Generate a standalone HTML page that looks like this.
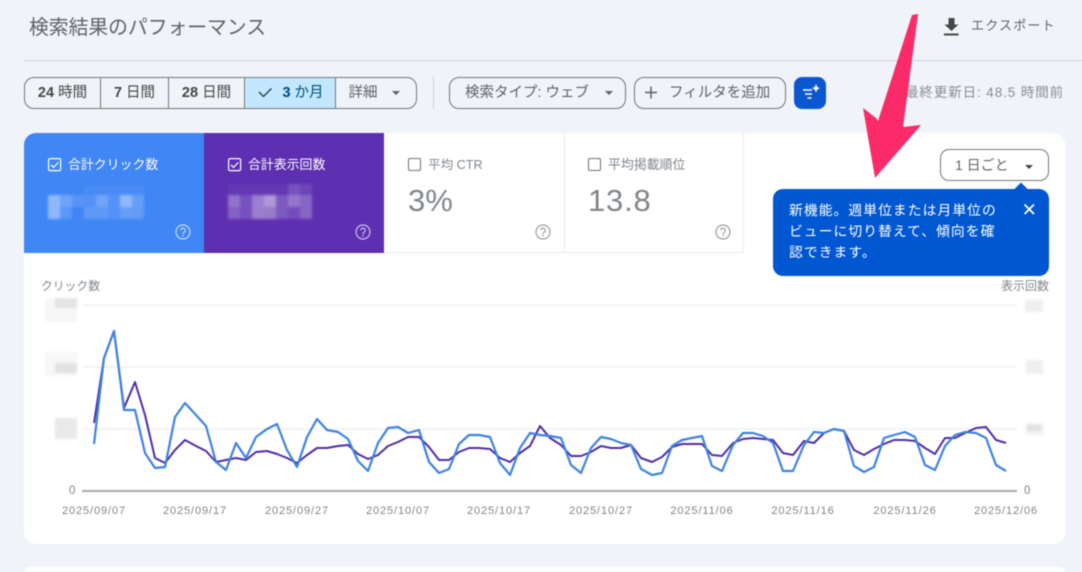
<!DOCTYPE html>
<html lang="ja"><head><meta charset="utf-8"><title>検索結果のパフォーマンス</title>
<style>
html,body{margin:0;padding:0;width:1082px;height:572px;overflow:hidden;background:#f0f4f9}
#w{position:relative;width:1082px;height:572px;overflow:hidden;background:#f0f4f9;font-family:"Liberation Sans","Noto Sans CJK JP",sans-serif;color:#5f6368;filter:blur(.4px)}
.a{position:absolute;white-space:nowrap}
.c{position:absolute;top:78px;height:31px;line-height:30px;text-align:center;font-size:14.5px;color:#444746;box-sizing:border-box}
.p{position:absolute;top:77px;height:32px;box-sizing:border-box;border:1px solid #747775;border-radius:10px;line-height:31px;font-size:14.5px;color:#5f6368;white-space:nowrap}
.t{position:absolute;top:133px;width:180px;height:120px;box-sizing:border-box}
.l{position:absolute;left:44px;top:24px;font-size:12.9px;line-height:16px;white-space:nowrap}
.v{position:absolute;left:24px;top:50px;font-size:31px;line-height:36px;color:#80868b}
.d{position:absolute;top:504px;width:90px;text-align:center;font-size:11px;line-height:14px;letter-spacing:.9px;color:#80868b}
svg{position:absolute;left:0;top:0;overflow:visible}
</style></head><body><div id="w">

<div class="a" style="left:29px;top:14px;font-size:19.8px;line-height:28px;color:#5f6368">検索結果のパフォーマンス</div>
<div class="a" style="left:24px;top:60px;width:1058px;height:1px;background:#d0d2d5"></div>

<svg width="1082" height="572" style="left:0;top:0">
<path d="M944 34.500h14.500" stroke="#444746" stroke-width="2"/>
<path d="M948.500 18h6v6.500h4l-7 6.500-7-6.500h4z" fill="#444746"/>
</svg>
<div class="a" style="left:971px;top:17px;font-size:13px;line-height:18px;letter-spacing:1.200px;color:#5f6368">エクスポート</div>

<div class="a" style="left:24px;top:77px;width:393px;height:32px;box-sizing:border-box;border:1px solid #747775;border-radius:10px;overflow:hidden">
  <div class="a" style="left:220px;top:0;width:91px;height:30px;background:#c2e7ff"></div>
  <div class="a" style="left:75px;top:0;width:1px;height:30px;background:#747775"></div>
  <div class="a" style="left:143px;top:0;width:1px;height:30px;background:#747775"></div>
  <div class="a" style="left:219px;top:0;width:1px;height:30px;background:#747775"></div>
  <div class="a" style="left:310px;top:0;width:1px;height:30px;background:#747775"></div>
</div>
<div class="c" style="left:25px;width:75px"><b style="font-weight:700">24</b> 時間</div>
<div class="c" style="left:101px;width:67px"><b style="font-weight:700">7</b> 日間</div>
<div class="c" style="left:169px;width:75px"><b style="font-weight:700">28</b> 日間</div>
<div class="c" style="left:278px;width:50px;color:#004a77"><b style="font-weight:700">3</b> か月</div>
<div class="c" style="left:335px;width:56px;color:#5f6368">詳細</div>
<svg width="1082" height="572">
<path d="M259 92l4.500 4.500 8-8" fill="none" stroke="#1f3a4d" stroke-width="1.300"/>
<path d="M392 91h8l-4 4z" fill="#5f6368"/>
<path d="M433.500 77v32" stroke="#cfd2d6"/>
</svg>

<div class="p" style="left:449px;width:177px;padding-left:15px">検索タイプ: ウェブ</div>
<div class="p" style="left:634px;width:152px;padding-left:34px">フィルタを追加</div>
<svg width="1082" height="572">
<path d="M605 91h8l-4 4z" fill="#5f6368"/>
<path d="M651 86.500v12M645 92.500h12" stroke="#5f6368" stroke-width="1.500"/>
<rect x="794" y="77" width="32" height="32" rx="8" fill="#0b57d0"/>
<path d="M803 90h9M805 94h7M807.500 98h4" stroke="#fff" stroke-width="1.500"/>
<path d="M816 84l1.300 3 2.700 1.200-2.700 1.300-1.300 3-1.300-3-2.700-1.300 2.700-1.200z" fill="#fff"/>
</svg>
<div class="a" style="left:905px;top:84px;font-size:13.5px;line-height:18px;letter-spacing:.9px;color:#8a8e92">最終更新日: 48.5 時間前</div>

<div class="a" style="left:24px;top:133px;width:1041px;height:411px;background:#fff;border-radius:12px"></div>
<div class="a" style="left:24px;top:567px;width:1041px;height:12px;background:#fff;border-radius:12px"></div>

<div class="t" style="left:24px;background:#4086f5;color:#fff;border-top-left-radius:12px"><div class="l">合計クリック数</div></div>
<div class="t" style="left:204px;background:#5e30b1;color:#fff"><div class="l">合計表示回数</div></div>
<div class="t" style="left:384px;background:#fff;border-bottom:1px solid #e8eaed;color:#80868b"><div class="l" style="font-size:12.6px">平均 CTR</div><div class="v">3%</div></div>
<div class="t" style="left:564px;background:#fff;border-left:1px solid #e8eaed;border-right:1px solid #e8eaed;border-bottom:1px solid #e8eaed;color:#80868b"><div class="l" style="left:43px">平均掲載順位</div><div class="v" style="left:23px;letter-spacing:.8px">13.8</div></div>

<svg width="1082" height="572">
<!-- mosaics -->
<g style="filter:blur(1.200px)">
<g fill="#fff">
<rect x="48" y="195" width="12" height="24" opacity=".42"/><rect x="60" y="207" width="12" height="12" opacity=".14"/><rect x="60" y="195" width="12" height="12" opacity=".24"/>
<rect x="72" y="195" width="12" height="12" opacity=".12"/><rect x="84" y="195" width="12" height="12" opacity=".1"/><rect x="84" y="207" width="12" height="12" opacity=".16"/>
<rect x="96" y="195" width="12" height="12" opacity=".26"/><rect x="96" y="207" width="12" height="12" opacity=".16"/><rect x="108" y="195" width="12" height="12" opacity=".1"/><rect x="108" y="207" width="12" height="12" opacity=".1"/>
<rect x="120" y="195" width="12" height="12" opacity=".42"/><rect x="120" y="207" width="12" height="12" opacity=".2"/><rect x="132" y="195" width="12" height="12" opacity=".2"/><rect x="132" y="207" width="12" height="12" opacity=".18"/>
<rect x="84" y="186" width="60" height="9" opacity=".05"/>
<rect x="228" y="195" width="12" height="12" opacity=".32"/><rect x="228" y="207" width="12" height="12" opacity=".24"/><rect x="240" y="195" width="12" height="24" opacity=".16"/>
<rect x="252" y="195" width="12" height="24" opacity=".38"/><rect x="264" y="195" width="12" height="12" opacity=".5"/><rect x="264" y="207" width="12" height="12" opacity=".36"/>
<rect x="276" y="195" width="12" height="24" opacity=".2"/><rect x="288" y="195" width="12" height="12" opacity=".34"/><rect x="288" y="207" width="12" height="12" opacity=".14"/>
<rect x="300" y="195" width="12" height="24" opacity=".26"/><rect x="288" y="184" width="12" height="11" opacity=".16"/><rect x="300" y="184" width="12" height="11" opacity=".1"/><rect x="228" y="184" width="60" height="11" opacity=".04"/>
</g>
<g fill="#000">
<rect x="45" y="298" width="32" height="24" fill="#f6f6f6"/><rect x="55" y="298" width="22" height="10" fill="#e4e4e4"/>
<rect x="45" y="352" width="32" height="24" fill="#f7f7f7"/><rect x="55" y="363" width="22" height="10" fill="#e2e2e2"/>
<rect x="55" y="418" width="22" height="21" fill="#e9e9e9"/>
<rect x="1025" y="300" width="18" height="12" fill="#efefef"/>
<rect x="1026" y="360" width="17" height="14" fill="#efefef"/>
<rect x="1026" y="423" width="18" height="12" fill="#f3f3f3"/><rect x="1027" y="425" width="14" height="6" fill="#e0e0e0"/>
</g>
</g>
<!-- checkboxes -->
<g fill="none" stroke="#fff" stroke-width="1.200">
<rect x="48.600" y="158.600" width="12" height="12" rx="1.500"/><path d="M51 164.800l2.600 2.600 4.700-5"/>
<rect x="228.600" y="158.600" width="12" height="12" rx="1.500"/><path d="M231 164.800l2.600 2.600 4.700-5"/>
</g>
<g fill="none" stroke="#6d7074" stroke-width="1">
<rect x="408.500" y="158.500" width="12" height="12" rx="1.500"/>
<rect x="588.500" y="158.500" width="12" height="12" rx="1.500"/>
</g>
<!-- gridlines -->
<path d="M82 305H1017M82 367H1017M82 429H1017" stroke="#f3f3f3" stroke-width="2"/>
<path d="M82 491H1017" stroke="#aaaaaa" stroke-width="2"/>
<!-- lines -->
<polyline fill="none" stroke="#512da8" stroke-width="2" stroke-linejoin="round" points="94,423 104,358 114,331 124,408 135,382 145,415 155,458 165,463 175,450 185,440 196,446 206,451 216,462 226,460 236,458 246,460 256,452 267,451 277,454 287,458 297,463 307,455 317,448 327,448 338,446 348,445 358,454 368,459 378,455 388,446 398,442 408,437 419,437 429,447 439,460 449,460 459,452 469,448 479,448 490,449 500,458 510,462 520,453 530,446 540,426 550,438 561,445 571,456 581,456 591,452 601,446 611,448 621,448 631,445 641,458 652,462 662,457 672,447 682,444 692,444 702,444 712,455 722,456 733,443 743,439 753,438 763,439 773,440 783,453 793,455 804,441 814,443 824,433 834,429 844,431 854,450 864,455 874,449 884,444 894,440 905,440 915,441 925,448 935,454 945,438 955,438 965,433 976,428 986,427 996,440 1006,443"/>
<polyline fill="none" stroke="#3f83e2" stroke-width="2.200" stroke-linejoin="round" points="94,444 104,358 114,331 124,410 135,410 145,453 155,468 165,467 175,417 185,403 196,415 206,426 216,462 226,470 236,443 246,458 256,437 267,429 277,424 287,450 297,467 307,437 317,419 327,430 338,432 348,439 358,461 368,471 378,443 388,428 398,427 408,433 419,430 429,462 439,473 449,469 459,444 469,435 479,435 490,437 500,463 510,475 520,448 530,433 540,435 550,436 561,438 571,465 581,473 591,448 601,437 611,439 621,443 631,445 641,469 652,475 662,473 672,446 682,440 692,438 702,436 712,466 722,471 733,445 743,433 753,433 763,436 773,443 783,471 793,471 804,445 814,432 824,433 834,429 844,431 854,466 864,472 874,467 884,438 894,435 905,432 915,437 925,465 935,470 945,446 955,435 965,432 976,433 986,438 996,465 1006,471"/>
<!-- help icons -->
<g fill="none" stroke-width="1.200">
<circle cx="183" cy="232" r="7" stroke="#c6dafc"/><circle cx="363" cy="232" r="7" stroke="#cdbde8"/><circle cx="543" cy="232" r="7" stroke="#9a9da1"/><circle cx="723" cy="232" r="7" stroke="#9a9da1"/>
<path d="M180.800 230.300a2.200 2.200 0 1 1 3.500 1.800c-.8.600-1.300 1-1.300 2" stroke="#c6dafc"/><path d="M360.800 230.300a2.200 2.200 0 1 1 3.500 1.800c-.8.600-1.300 1-1.300 2" stroke="#cdbde8"/><path d="M540.800 230.300a2.200 2.200 0 1 1 3.500 1.800c-.8.600-1.300 1-1.300 2" stroke="#9a9da1"/><path d="M720.800 230.300a2.200 2.200 0 1 1 3.500 1.800c-.8.600-1.300 1-1.300 2" stroke="#9a9da1"/>
</g>
<g fill="#c6dafc"><rect x="182.300" y="235" width="1.400" height="1.400"/></g><g fill="#cdbde8"><rect x="362.300" y="235" width="1.400" height="1.400"/></g><g fill="#9a9da1"><rect x="542.300" y="235" width="1.400" height="1.400"/><rect x="722.300" y="235" width="1.400" height="1.400"/></g>
</svg>

<div class="a" style="left:940px;top:149px;width:109px;height:32px;box-sizing:border-box;border:1px solid #747775;border-radius:9px;background:#fff"></div>
<div class="a" style="left:955px;top:156px;font-size:14px;line-height:18px;color:#5f6368">1 日ごと</div>

<div class="a" style="left:773px;top:189px;width:276px;height:87px;background:#0057d2;border-radius:10px"></div>
<svg width="1082" height="572">
<path d="M1025 165h8l-4 4z" fill="#444746"/>
<path d="M1021 182.500l7 7h-14z" fill="#0057d2"/>
<path d="M1024.500 204.500l9.500 9.500M1034 204.500l-9.500 9.500" stroke="#fff" stroke-width="1.800"/>
<polygon fill="#fb2b69" points="918,14 912,15 878,121 876,118 863,108 875,178 921,125 903,127"/>
</svg>
<div class="a" style="left:789px;top:200px;font-size:13.8px;line-height:21px;letter-spacing:1.050px;color:#fff;white-space:pre-line">新機能。週単位または月単位の
ビューに切り替えて、傾向を確
認できます。</div>

<div class="a" style="left:41px;top:278px;font-size:11.8px;line-height:16px;color:#80868b">クリック数</div>
<div class="a" style="left:1001px;top:278px;font-size:12px;line-height:16px;color:#80868b">表示回数</div>
<div class="a" style="left:69px;top:484px;font-size:11.5px;line-height:14px;color:#80868b">0</div>
<div class="a" style="left:1024px;top:484px;font-size:11.5px;line-height:14px;color:#80868b">0</div>

<div class="d" style="left:49px">2025/09/07</div>
<div class="d" style="left:150px">2025/09/17</div>
<div class="d" style="left:252px">2025/09/27</div>
<div class="d" style="left:353px">2025/10/07</div>
<div class="d" style="left:454px">2025/10/17</div>
<div class="d" style="left:556px">2025/10/27</div>
<div class="d" style="left:657px">2025/11/06</div>
<div class="d" style="left:758px">2025/11/16</div>
<div class="d" style="left:860px">2025/11/26</div>
<div class="d" style="left:961px">2025/12/06</div>
</div></body></html>
